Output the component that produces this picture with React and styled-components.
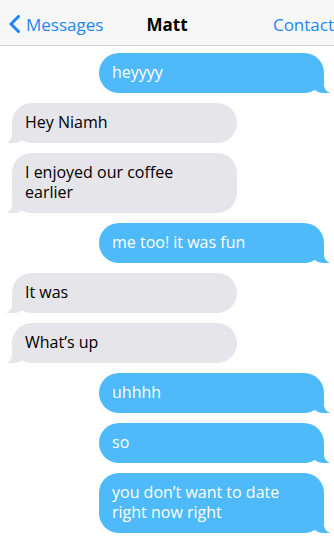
import React from "react";
import styled, { createGlobalStyle, css } from "styled-components";

const GlobalStyle = createGlobalStyle`
  html, body {
    margin: 0;
    padding: 0;
    background: #fff;
    font-family: "Open Sans", "Noto Sans", sans-serif;
  }
`;

const messages = [
  { fromMe: true, text: "heyyyy" },
  { fromMe: false, text: "Hey Niamh" },
  { fromMe: false, text: "I enjoyed our coffee earlier" },
  { fromMe: true, text: "me too! it was fun" },
  { fromMe: false, text: "It was" },
  { fromMe: false, text: "What’s up" },
  { fromMe: true, text: "uhhhh" },
  { fromMe: true, text: "so" },
  { fromMe: true, text: "you don’t want to date right now right" },
];

const Screen = styled.div`
  width: 334px;
  height: 540px;
  overflow: hidden;
  background: #fff;
`;

const Header = styled.header`
  box-sizing: border-box;
  height: 46px;
  padding-top: 3px;
  display: grid;
  grid-template-columns: 1fr auto 1fr;
  align-items: center;
  background: #f7f7f7;
  border-bottom: 1px solid #d4d4d6;
  overflow: hidden;
  font-size: 17px;
`;

const Back = styled.div`
  display: flex;
  align-items: center;
  gap: 5px;
  padding-left: 8px;
  color: #1c86f2;
`;

const Title = styled.div`
  font-weight: 700;
  color: #000;
`;

const Contact = styled.div`
  justify-self: end;
  color: #1c86f2;
  white-space: nowrap;
`;

const Thread = styled.div`
  display: flex;
  flex-direction: column;
  gap: 10px;
  padding: 7px 10px 0 12px;
`;

const Bubble = styled.div`
  position: relative;
  box-sizing: border-box;
  width: 225px;
  padding: 9px 13px 11px;
  border-radius: 20px;
  font-size: 16px;
  line-height: 20px;

  &::before,
  &::after {
    content: "";
    position: absolute;
    bottom: 0;
    height: 18px;
  }

  ${({ $fromMe }) =>
    $fromMe
      ? css`
          align-self: flex-end;
          background: #4fbaf9;
          color: #fff;
          &::before {
            right: -6px;
            width: 20px;
            background: #4fbaf9;
            border-bottom-left-radius: 14px 12px;
          }
          &::after {
            right: -20px;
            width: 20px;
            background: #fff;
            border-bottom-left-radius: 8px;
          }
        `
      : css`
          align-self: flex-start;
          background: #e5e5ea;
          color: #000;
          &::before {
            left: -5px;
            width: 20px;
            background: #e5e5ea;
            border-bottom-right-radius: 14px 12px;
          }
          &::after {
            left: -20px;
            width: 20px;
            background: #fff;
            border-bottom-right-radius: 8px;
          }
        `}
`;

const Text = styled.span`
  position: relative;
  z-index: 2;
`;

export default function App() {
  return (
    <Screen>
      <GlobalStyle />
      <Header>
        <Back>
          <svg width="13" height="18" viewBox="0 0 13 18" fill="none">
            <path d="M10.5 1.5 L3 9 L10.5 16.5" stroke="#1c86f2" strokeWidth="3" strokeLinecap="round" strokeLinejoin="round" />
          </svg>
          <span>Messages</span>
        </Back>
        <Title>Matt</Title>
        <Contact>Contact</Contact>
      </Header>
      <Thread>
        {messages.map((m, i) => (
          <Bubble key={i} $fromMe={m.fromMe}>
            <Text>{m.text}</Text>
          </Bubble>
        ))}
      </Thread>
    </Screen>
  );
}
